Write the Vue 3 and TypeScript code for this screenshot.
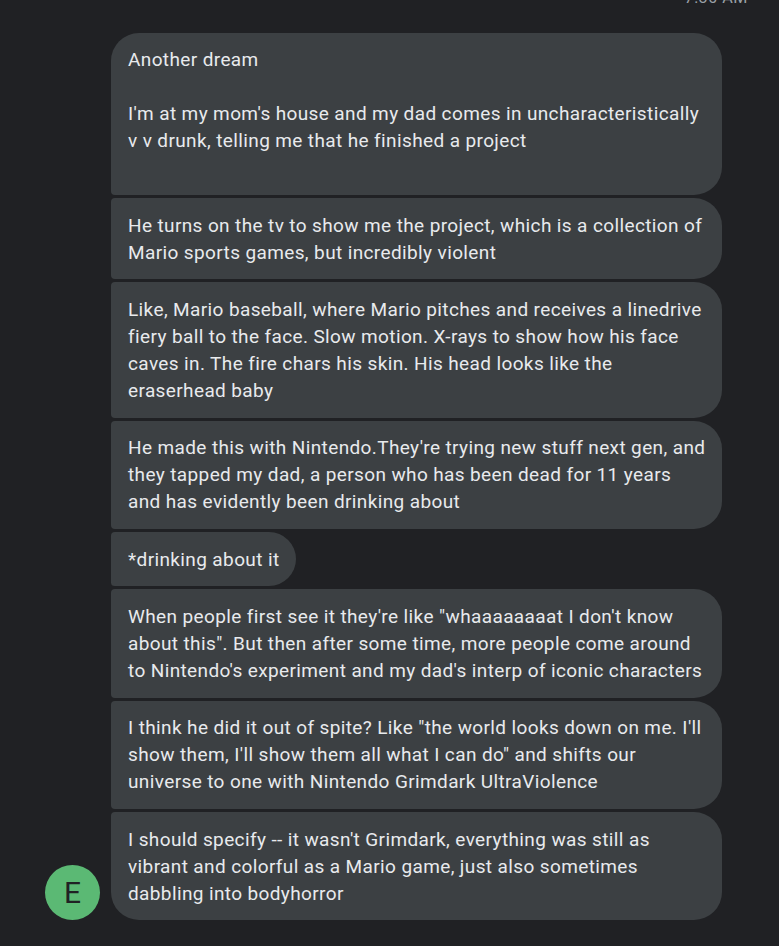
<script setup lang="ts">
const messages: string[] = [
  "Another dream\n\nI'm at my mom's house and my dad comes in uncharacteristically v v drunk, telling me that he finished a project\n\u00a0",
  "He turns on the tv to show me the project, which is a collection of Mario sports games, but incredibly violent",
  "Like, Mario baseball, where Mario pitches and receives a linedrive fiery ball to the face. Slow motion. X-rays to show how his face caves in. The fire chars his skin. His head looks like the eraserhead baby",
  "He made this with Nintendo.They're trying new stuff next gen, and they tapped my dad, a person who has been dead for 11 years and has evidently been drinking about",
  "*drinking about it",
  "When people first see it they're like \"whaaaaaaaat I don't know about this\". But then after some time, more people come around to Nintendo's experiment and my dad's interp of iconic characters",
  "I think he did it out of spite? Like \"the world looks down on me. I'll show them, I'll show them all what I can do\" and shifts our universe to one with Nintendo Grimdark UltraViolence",
  "I should specify -- it wasn't Grimdark, everything was still as vibrant and colorful as a Mario game, just also sometimes dabbling into bodyhorror",
];
</script>

<template>
  <main class="thread">
    <div class="time">7:30 AM</div>
    <section class="group">
      <div class="avatar">E</div>
      <div class="bubbles">
        <p v-for="(m, i) in messages" :key="i" class="bubble">{{ m }}</p>
      </div>
    </section>
  </main>
</template>

<style>
html, body { margin: 0; background: #202124; }
</style>

<style scoped>
.thread {
  height: 946px;
  overflow: hidden;
  box-sizing: border-box;
  background: #202124;
  font-family: Roboto, "Liberation Sans", sans-serif;
  display: flex;
  flex-direction: column;
}
.time {
  height: 14px;
  margin-top: -9px;
  margin-bottom: 27.7px;
  padding-right: 31px;
  text-align: right;
  font-size: 16.2px;
  letter-spacing: 0.5px;
  line-height: 14px;
  color: #9aa0a6;
  flex: none;
}
.group {
  display: flex;
  align-items: flex-end;
  padding-left: 45px;
  padding-right: 57px;
  gap: 11px;
}
.avatar {
  flex: none;
  width: 55px;
  height: 55px;
  border-radius: 50%;
  background: #5bb974;
  color: #202124;
  font-size: 30px;
  display: flex;
  align-items: center;
  justify-content: center;
}
.bubbles {
  flex: 1;
  min-width: 0;
  display: flex;
  flex-direction: column;
  align-items: flex-start;
  gap: 3.05px;
}
.bubble {
  margin: 0;
  width: fit-content;
  max-width: 100%;
  box-sizing: border-box;
  padding: 13.65px 16px 13.65px 17px;
  background: #3c4043;
  color: #e8eaed;
  font-size: 19px;
  letter-spacing: 0.38px;
  line-height: 27px;
  white-space: pre-wrap;
  border-radius: 4px 28px 28px 4px;
}
.bubble:first-child { border-top-left-radius: 28px; }
.bubble:last-child { border-bottom-left-radius: 28px; }
</style>
